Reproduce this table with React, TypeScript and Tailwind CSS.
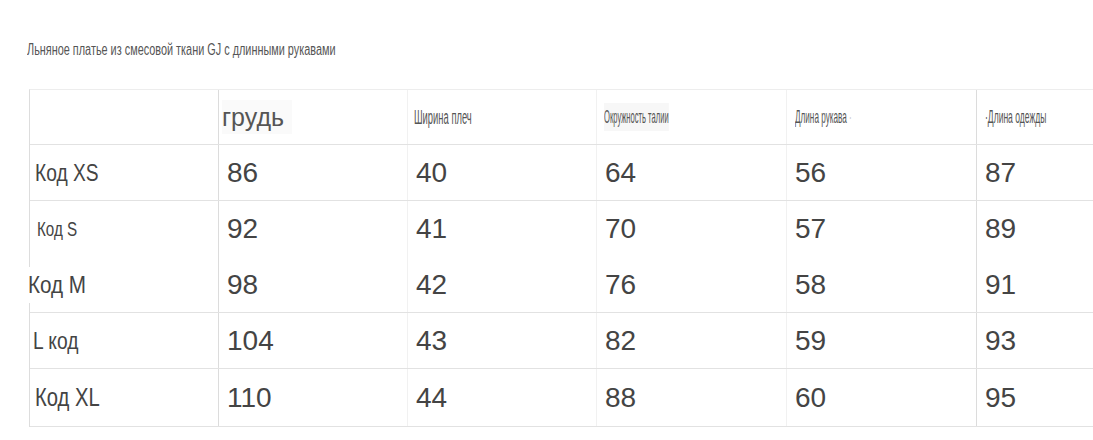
import React from 'react';

interface SizeRow {
  label: string;
  labelClass: string;
  values: number[];
  rowClass: string;
}

const rows: SizeRow[] = [
  { label: 'Код XS', labelClass: 'ml-[5px] text-[24px] scale-x-[0.8]', values: [86, 40, 64, 56, 87], rowClass: 'h-[56px] border-b border-[#e2e2e2]' },
  { label: 'Код S', labelClass: 'ml-[7px] text-[20px] scale-x-[0.76]', values: [92, 41, 70, 57, 89], rowClass: 'h-[56px]' },
  { label: 'Код M', labelClass: '-ml-[2px] text-[24px] scale-x-[0.86] bg-white', values: [98, 42, 76, 58, 91], rowClass: 'h-[56px] border-b border-[#e2e2e2]' },
  { label: 'L код', labelClass: 'ml-[3px] text-[24px] scale-x-[0.8]', values: [104, 43, 82, 59, 93], rowClass: 'h-[56px] border-b border-[#e2e2e2]' },
  { label: 'Код XL', labelClass: 'ml-[5px] text-[25px] scale-x-[0.81]', values: [110, 44, 88, 60, 95], rowClass: 'h-[58px] border-b border-[#e2e2e2]' },
];

// colours of the column separators, left to right
const colLines = ['border-[#dcdcdc]', 'border-[#f1f1f1]', 'border-[#f1f1f1]', 'border-[#f1f1f1]', 'border-[#dcdcdc]'];

const grid = 'grid grid-cols-[188px_189px_189px_190px_190px_1fr]';

export default function App() {
  return (
    <div className="w-[1093px] h-[440px] overflow-hidden bg-white font-['Liberation_Sans',Arial,sans-serif]">
      <div className="h-[89px] pt-[38px] pl-[27px]">
        <div className="inline-block origin-left scale-x-[0.68] text-[16px] text-[#555] whitespace-nowrap">
          Льняное платье из смесовой ткани GJ с длинными рукавами
        </div>
      </div>

      <div className="ml-[29px] w-[1080px] border-l border-t border-l-[#dddddd] border-t-[#ededed]">
        {/* шапка */}
        <div className={`${grid} h-[55px] border-b border-[#e2e2e2]`}>
          <div />
          <div className={`flex items-center border-l ${colLines[0]} pl-[3px]`}>
            <span className="bg-[#fafafa] pr-2 text-[25px] leading-[34px] text-[#555]">грудь</span>
          </div>
          <div className={`flex items-center border-l ${colLines[1]} pl-[6px]`}>
            <span className="inline-block origin-left scale-x-[0.47] whitespace-nowrap text-[20px] text-[#555]">Ширина плеч</span>
          </div>
          <div className={`flex items-center border-l ${colLines[2]} pl-[7px]`}>
            <span className="inline-block origin-left scale-x-[0.4] whitespace-nowrap bg-[#f7f7f7] text-[19px] text-[#555]">Окружность талии</span>
          </div>
          <div className={`flex items-center border-l ${colLines[3]} pl-[8px]`}>
            <span className="inline-block origin-left scale-x-[0.43] whitespace-nowrap text-[19px] text-[#555]">Длина рукава <span className="text-[#ccc]">·</span></span>
          </div>
          <div className={`flex items-center border-l ${colLines[4]} pl-[8px]`}>
            <span className="inline-block origin-left scale-x-[0.45] whitespace-nowrap text-[19px] text-[#555]">·Длина одежды</span>
          </div>
        </div>

        {rows.map((row) => (
          <div key={row.label} className={`${grid} ${row.rowClass}`}>
            <div className="flex items-center">
              <span className={`inline-block origin-left whitespace-nowrap text-[#444] ${row.labelClass}`}>{row.label}</span>
            </div>
            {row.values.map((v, i) => (
              <div key={i} className={`flex items-center border-l ${colLines[i]} pl-[8px]`}>
                <span className="text-[28px] text-[#444]">{v}</span>
              </div>
            ))}
          </div>
        ))}
      </div>
    </div>
  );
}
